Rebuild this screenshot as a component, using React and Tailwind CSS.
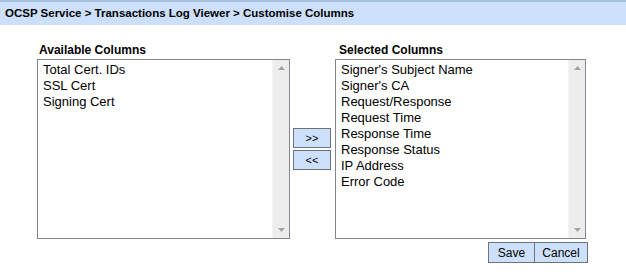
import React from "react";

const available = ["Total Cert. IDs", "SSL Cert", "Signing Cert"];
const selected = [
  "Signer's Subject Name",
  "Signer's CA",
  "Request/Response",
  "Request Time",
  "Response Time",
  "Response Status",
  "IP Address",
  "Error Code",
];

function ListBox({ items, width }) {
  return (
    <div className={`flex h-[180px] ${width} border border-[#82868f] bg-white`}>
      <div className="flex-1 pl-[5px] pt-[2px] text-[13px] leading-[16px] text-black">
        {items.map((it) => (
          <div key={it}>{it}</div>
        ))}
      </div>
      <div className="flex w-[17px] flex-col items-center justify-between border-l border-[#f4f4f4] bg-[#ededed] py-[6px]">
        <svg width="7" height="4" viewBox="0 0 7 4">
          <path d="M3.5 0 L7 4 L0 4 Z" fill="#a3a3a3" />
        </svg>
        <svg width="7" height="4" viewBox="0 0 7 4">
          <path d="M0 0 L7 0 L3.5 4 Z" fill="#a3a3a3" />
        </svg>
      </div>
    </div>
  );
}

function Btn({ children, className = "" }) {
  return (
    <button
      className={`border border-[#6f7378] bg-[#cde0fb] leading-none text-black ${className}`}
    >
      {children}
    </button>
  );
}

export default function App() {
  return (
    <div
      className="h-[278px] w-[626px] bg-white"
      style={{ fontFamily: '"Liberation Sans", Arial, sans-serif' }}
    >
      <div className="flex h-[25px] items-center border-t-2 border-[#a7c0de] bg-[#cde0fb] pl-[5px] text-[11.5px] font-bold text-black">
        OCSP Service &gt; Transactions Log Viewer &gt; Customise Columns
      </div>

      <div className="flex pl-[37px] pt-[16px]">
        <div className="flex flex-col">
          <div className="pl-[2px] text-[12px] font-bold leading-[18px] text-black">
            Available Columns
          </div>
          <ListBox items={available} width="w-[253px]" />
        </div>

        <div className="flex flex-col gap-[2px] pl-[3px] pr-[4px] pt-[87px]">
          <Btn className="h-[20px] w-[38px] text-[11px]">&gt;&gt;</Btn>
          <Btn className="h-[20px] w-[38px] text-[11px]">&lt;&lt;</Btn>
        </div>

        <div className="flex flex-col">
          <div className="pl-[4px] text-[12px] font-bold leading-[18px] text-black">
            Selected Columns
          </div>
          <ListBox items={selected} width="w-[251px]" />
          <div className="mr-[-2px] mt-[3px] flex justify-end">
            <Btn className="h-[21px] w-[47px] text-[12px]">Save</Btn>
            <Btn className="-ml-px h-[21px] w-[54px] text-[12px]">Cancel</Btn>
          </div>
        </div>
      </div>
    </div>
  );
}
